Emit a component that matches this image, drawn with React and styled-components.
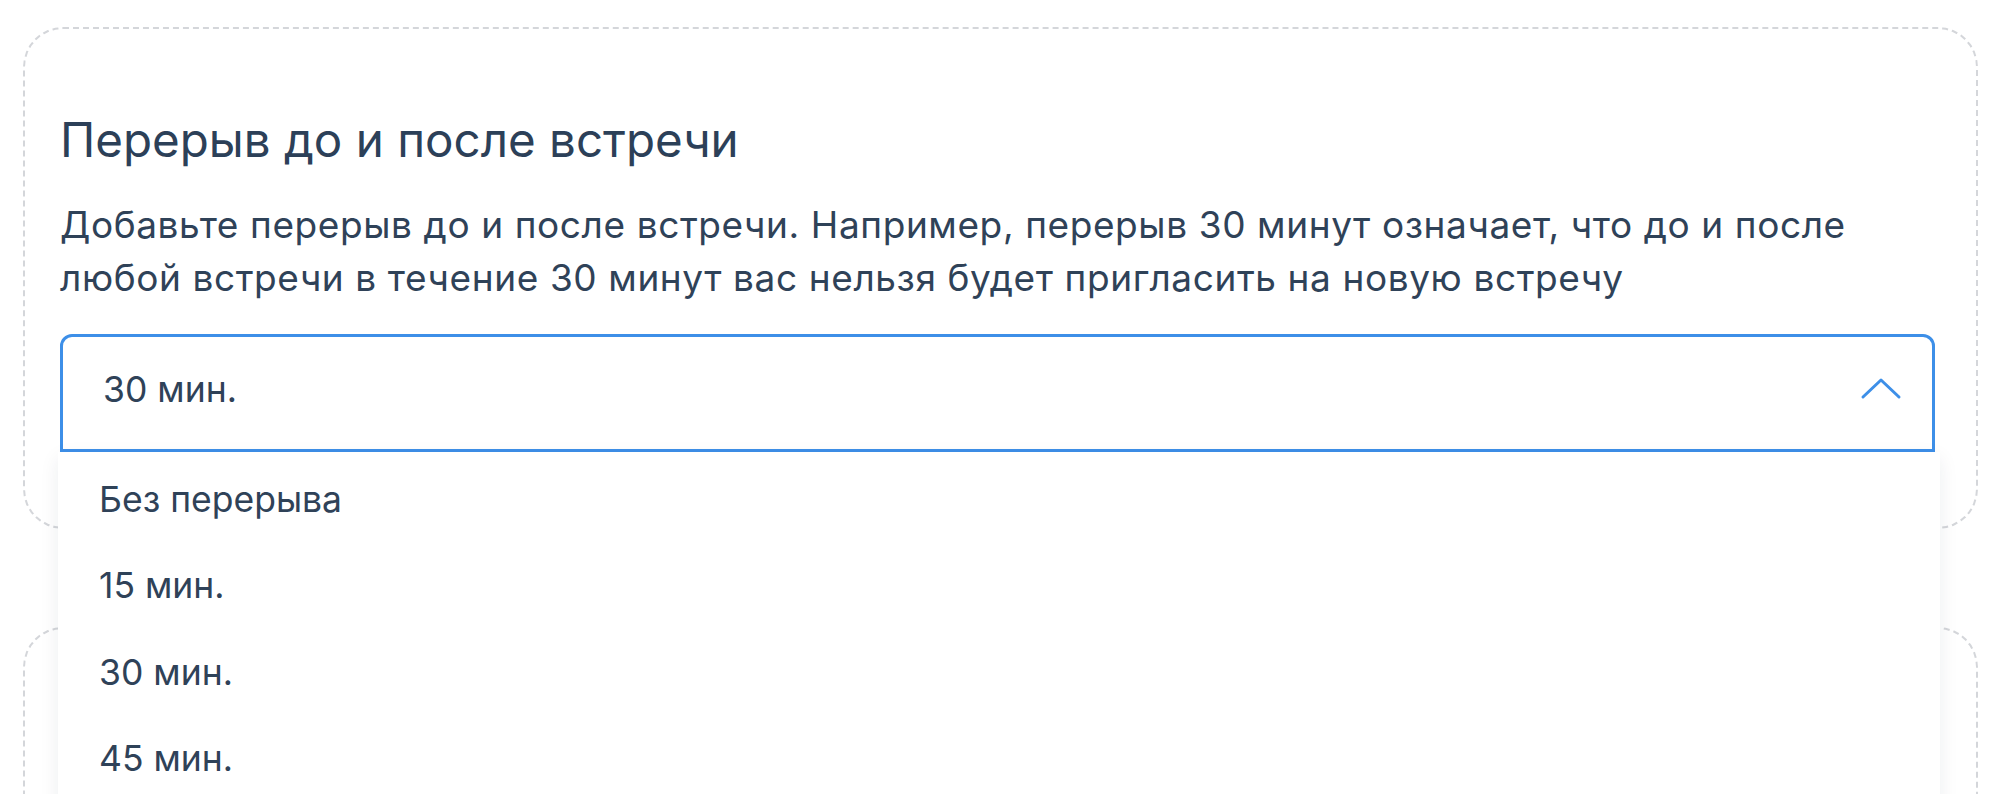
import React from "react";
import styled, { createGlobalStyle } from "styled-components";

const GlobalStyle = createGlobalStyle`
  body {
    margin: 0;
    background: #ffffff;
    font-family: Inter, "Noto Sans", sans-serif;
    overflow: hidden;
  }
`;

const Page = styled.div`
  display: flex;
  flex-direction: column;
  gap: 98px;
  padding: 27px 22px 0 23px;
`;

const Card = styled.section`
  border: 2px dashed #d4d6da;
  border-radius: 40px;
  padding: ${(p) => (p.$empty ? "0" : "84px 41px 75px 35px")};
  min-height: ${(p) => (p.$empty ? "320px" : "auto")};
`;

const Title = styled.h2`
  margin: 0;
  font-size: 47.5px;
  font-weight: 400;
  line-height: 53px;
  color: #2c4058;
`;

const Description = styled.p`
  margin: 32px 0 0;
  font-size: 37px;
  letter-spacing: 0.6px;
  line-height: 53px;
  color: #2f4258;
`;

const SelectWrap = styled.div`
  position: relative;
  margin-top: 30px;
`;

const Trigger = styled.div`
  height: 118px;
  box-sizing: border-box;
  border: 3px solid #3d8fe8;
  border-radius: 12px 12px 0 0;
  display: flex;
  align-items: center;
  justify-content: space-between;
  padding: 0 30px 8px 40px;
  font-size: 35.5px;
  color: #2f4258;
`;

const Menu = styled.ul`
  position: absolute;
  top: 100%;
  left: -2px;
  right: -5px;
  margin: 0;
  padding: 4px 0 0;
  list-style: none;
  background: #ffffff;
  box-shadow: 0 6px 18px rgba(30, 40, 60, 0.08);
  z-index: 2;
`;

const Option = styled.li`
  height: 86.5px;
  display: flex;
  align-items: center;
  padding-left: 41px;
  font-size: 35.5px;
  color: #2f4258;
`;

const Chevron = () => (
  <svg width="42" height="24" viewBox="0 0 42 24" fill="none">
    <path
      d="M3 20 L21 3 L39 20"
      stroke="#3d8fe8"
      strokeWidth="3"
      strokeLinecap="round"
      strokeLinejoin="round"
    />
  </svg>
);

const options = ["Без перерыва", "15 мин.", "30 мин.", "45 мин.", "60 мин."];

export default function App() {
  return (
    <>
      <GlobalStyle />
      <Page>
        <Card>
          <Title>Перерыв до и после встречи</Title>
          <Description>
            Добавьте перерыв до и после встречи. Например, перерыв 30 минут
            означает, что до и после любой встречи в течение 30 минут вас нельзя
            будет пригласить на новую встречу
          </Description>
          <SelectWrap>
            <Trigger>
              <span>30 мин.</span>
              <Chevron />
            </Trigger>
            <Menu>
              {options.map((o) => (
                <Option key={o}>{o}</Option>
              ))}
            </Menu>
          </SelectWrap>
        </Card>
        <Card $empty />
      </Page>
    </>
  );
}
